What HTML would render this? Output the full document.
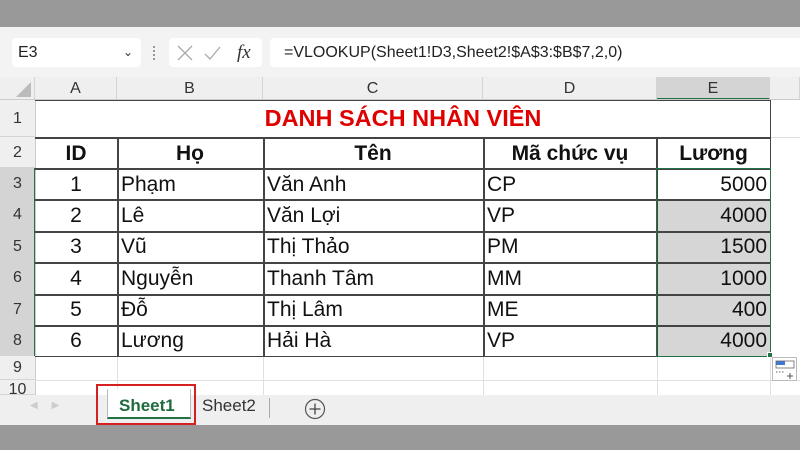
<!DOCTYPE html><html><head><meta charset="utf-8"><style>
*{margin:0;padding:0;box-sizing:border-box}
body{width:800px;height:450px;overflow:hidden;background:#fff;font-family:"Liberation Sans",sans-serif;position:relative}
.a{position:absolute}
.c{position:absolute;font-size:21px;color:#111;line-height:31px;white-space:nowrap}
.rh{position:absolute;left:0;width:35px;text-align:center;font-size:16px;color:#333;border-bottom:1px solid #d4d4d4;background:#efefef}
.ch{position:absolute;top:77px;height:23px;text-align:center;font-size:16px;color:#333;line-height:23px;border-right:1px solid #d4d4d4;background:#efefef}
</style></head><body>
<div class="a" style="left:0;top:0;width:800px;height:27px;background:#999"></div>
<div class="a" style="left:0;top:27px;width:800px;height:50px;background:#f3f3f3"></div>
<div class="a" style="left:12px;top:38px;width:129px;height:29px;background:#fff;border-radius:4px;font-size:16px;line-height:29px;padding-left:6px;color:#222">E3<span style="position:absolute;right:8px;top:0;font-size:12px;color:#333">&#8964;</span></div>
<div class="a" style="left:153px;top:46px;width:2px;height:14px;border-left:2px dotted #999"></div>
<div class="a" style="left:169px;top:38px;width:93px;height:29px;background:#fff;border-radius:4px"></div>
<svg class="a" style="left:175px;top:44px" width="85" height="18"><path d="M3 2l14 14M17 2L3 16" stroke="#aaa" stroke-width="1.3" fill="none"/><path d="M30 10l5 5 10-12" stroke="#aaa" stroke-width="1.3" fill="none"/><text x="62" y="14" font-family="Liberation Serif" font-style="italic" font-size="19" fill="#333">fx</text></svg>
<div class="a" style="left:270px;top:38px;width:530px;height:29px;background:#fff;border-radius:4px 0 0 4px;font-size:16px;line-height:29px;padding-left:14px;color:#222">=VLOOKUP(Sheet1!D3,Sheet2!$A$3:$B$7,2,0)</div>
<div class="a" style="left:0;top:77px;width:35px;height:23px;background:#efefef;border-right:1px solid #d4d4d4"></div>
<svg class="a" style="left:14px;top:82px" width="18" height="16"><path d="M17 0V15H2Z" fill="#bbb"/></svg>
<div class="ch" style="left:35px;width:82px">A</div>
<div class="ch" style="left:117px;width:146px">B</div>
<div class="ch" style="left:263px;width:220px">C</div>
<div class="ch" style="left:483px;width:174px">D</div>
<div class="ch" style="left:657px;width:113px;background:#d4d4d4;border-bottom:2px solid #217346">E</div>
<div class="ch" style="left:770px;width:30px"></div>
<div class="a" style="left:0;top:99px;width:800px;height:1px;background:#ccc"></div>
<div class="rh" style="top:100px;height:37px;line-height:37px">1</div>
<div class="rh" style="top:137px;height:31px;line-height:31px">2</div>
<div class="rh" style="top:168px;height:31px;line-height:31px;background:#d4d4d4">3</div>
<div class="rh" style="top:199px;height:32px;line-height:32px;background:#d4d4d4">4</div>
<div class="rh" style="top:231px;height:31px;line-height:31px;background:#d4d4d4">5</div>
<div class="rh" style="top:262px;height:32px;line-height:32px;background:#d4d4d4">6</div>
<div class="rh" style="top:294px;height:31px;line-height:31px;background:#d4d4d4">7</div>
<div class="rh" style="top:325px;height:31px;line-height:31px;background:#d4d4d4">8</div>
<div class="rh" style="top:356px;height:24px;line-height:24px">9</div>
<div class="rh" style="top:380px;height:15px;line-height:20px;overflow:hidden">10</div>
<div class="a" style="left:34px;top:168px;width:2px;height:188px;background:#217346"></div>
<div class="a" style="left:35px;top:100px;width:0;height:295px;border-left:1px solid #ccc"></div>
<div class="a" style="left:770px;top:137px;width:30px;height:1px;background:#e0e0e0"></div>
<div class="a" style="left:35px;top:380px;width:765px;height:1px;background:#e0e0e0"></div>
<div class="a" style="left:117px;top:356px;width:1px;height:39px;background:#e0e0e0"></div>
<div class="a" style="left:263px;top:356px;width:1px;height:39px;background:#e0e0e0"></div>
<div class="a" style="left:483px;top:356px;width:1px;height:39px;background:#e0e0e0"></div>
<div class="a" style="left:657px;top:356px;width:1px;height:39px;background:#e0e0e0"></div>
<div class="a" style="left:770px;top:356px;width:1px;height:39px;background:#e0e0e0"></div>
<div class="a" style="left:658px;top:200px;width:112px;height:156px;background:#d6d6d6"></div>
<div class="a" style="left:35px;top:100px;width:736px;height:257px;border:1.5px solid #444;border-left:none"></div>
<div class="a" style="left:35px;top:137px;width:736px;height:1.5px;background:#444"></div>
<div class="a" style="left:35px;top:168px;width:736px;height:1.5px;background:#444"></div>
<div class="a" style="left:35px;top:199px;width:736px;height:1.5px;background:#444"></div>
<div class="a" style="left:35px;top:231px;width:736px;height:1.5px;background:#444"></div>
<div class="a" style="left:35px;top:262px;width:736px;height:1.5px;background:#444"></div>
<div class="a" style="left:35px;top:294px;width:736px;height:1.5px;background:#444"></div>
<div class="a" style="left:35px;top:325px;width:736px;height:1.5px;background:#444"></div>
<div class="a" style="left:117px;top:137px;width:1.5px;height:219px;background:#444"></div>
<div class="a" style="left:263px;top:137px;width:1.5px;height:219px;background:#444"></div>
<div class="a" style="left:483px;top:137px;width:1.5px;height:219px;background:#444"></div>
<div class="a" style="left:656px;top:137px;width:1.5px;height:219px;background:#444"></div>
<div class="a" style="left:656px;top:168px;width:115px;height:189px;border:1.5px solid #217346"></div>
<div class="a" style="left:767px;top:352px;width:6px;height:6px;background:#217346;border:1px solid #fff"></div>
<svg class="a" style="left:772px;top:357px" width="25" height="24"><rect x=".5" y=".5" width="24" height="23" fill="#fff" stroke="#bbb"/><rect x="4" y="4" width="9" height="4" fill="#3c78d8"/><rect x="4" y="4" width="18" height="7" fill="none" stroke="#666" stroke-width=".8"/><path d="M4 15h9" stroke="#666" stroke-dasharray="1.5 1.5"/><path d="M15 19h6M18 16v6" stroke="#555"/></svg>
<div class="c" style="left:35px;top:103px;width:736px;text-align:center;color:#e00000;font-weight:bold;font-size:23.5px">DANH SÁCH NHÂN VIÊN</div>
<div class="c" style="left:35px;top:138px;width:82px;text-align:center;font-weight:bold">ID</div>
<div class="c" style="left:117px;top:138px;width:146px;text-align:center;font-weight:bold">Họ</div>
<div class="c" style="left:263px;top:138px;width:220px;text-align:center;font-weight:bold">Tên</div>
<div class="c" style="left:483px;top:138px;width:174px;text-align:center;font-weight:bold">Mã chức vụ</div>
<div class="c" style="left:657px;top:138px;width:113px;text-align:center;font-weight:bold">Lương</div>
<div style="position:absolute;left:0;top:169px">
<div class="c" style="left:35px;top:0;width:82px;text-align:center">1</div><div class="c" style="left:121px;top:0">Phạm</div><div class="c" style="left:267px;top:0">Văn Anh</div><div class="c" style="left:487px;top:0">CP</div><div class="c" style="left:657px;top:0;width:110px;text-align:right">5000</div>
<div class="c" style="left:35px;top:31px;width:82px;text-align:center">2</div><div class="c" style="left:121px;top:31px">Lê</div><div class="c" style="left:267px;top:31px">Văn Lợi</div><div class="c" style="left:487px;top:31px">VP</div><div class="c" style="left:657px;top:31px;width:110px;text-align:right">4000</div>
<div class="c" style="left:35px;top:62px;width:82px;text-align:center">3</div><div class="c" style="left:121px;top:62px">Vũ</div><div class="c" style="left:267px;top:62px">Thị Thảo</div><div class="c" style="left:487px;top:62px">PM</div><div class="c" style="left:657px;top:62px;width:110px;text-align:right">1500</div>
<div class="c" style="left:35px;top:94px;width:82px;text-align:center">4</div><div class="c" style="left:121px;top:94px">Nguyễn</div><div class="c" style="left:267px;top:94px">Thanh Tâm</div><div class="c" style="left:487px;top:94px">MM</div><div class="c" style="left:657px;top:94px;width:110px;text-align:right">1000</div>
<div class="c" style="left:35px;top:125px;width:82px;text-align:center">5</div><div class="c" style="left:121px;top:125px">Đỗ</div><div class="c" style="left:267px;top:125px">Thị Lâm</div><div class="c" style="left:487px;top:125px">ME</div><div class="c" style="left:657px;top:125px;width:110px;text-align:right">400</div>
<div class="c" style="left:35px;top:156px;width:82px;text-align:center">6</div><div class="c" style="left:121px;top:156px">Lương</div><div class="c" style="left:267px;top:156px">Hải Hà</div><div class="c" style="left:487px;top:156px">VP</div><div class="c" style="left:657px;top:156px;width:110px;text-align:right">4000</div>
</div>
<div class="a" style="left:0;top:395px;width:800px;height:30px;background:#efefef"></div>
<div class="a" style="left:30px;top:400px;font-size:10px;color:#ccc">&#9664;&nbsp;&nbsp;&nbsp;&nbsp;&nbsp;&#9654;</div>
<div class="a" style="left:107px;top:389px;width:84px;height:30px;background:#fff;border-left:1px solid #bbb;border-right:1px solid #bbb;border-bottom:2px solid #217346"></div>
<div class="a" style="left:96px;top:384px;width:100px;height:41px;border:2px solid #d62020"></div>
<div class="a" style="left:119px;top:396px;font-size:17px;font-weight:bold;color:#1e6b3e">Sheet1</div>
<div class="a" style="left:202px;top:396px;font-size:17px;color:#333">Sheet2</div>
<div class="a" style="left:269px;top:398px;width:1px;height:20px;background:#aaa"></div>
<svg class="a" style="left:304px;top:398px" width="22" height="22"><circle cx="11" cy="11" r="9.5" fill="none" stroke="#555" stroke-width="1.2"/><path d="M11 5.5v11M5.5 11h11" stroke="#444" stroke-width="1.3"/></svg>
<div class="a" style="left:0;top:425px;width:800px;height:25px;background:#999"></div>
</body></html>
